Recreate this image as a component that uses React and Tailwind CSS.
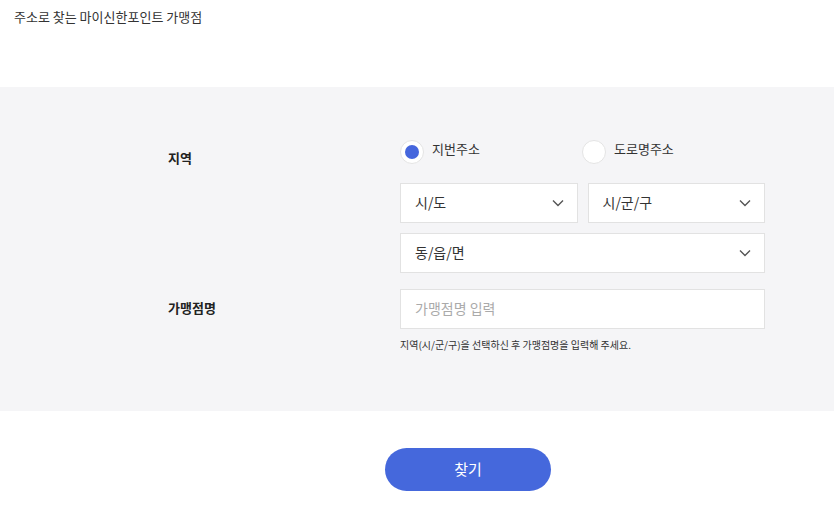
import React from "react";

const Chevron = () => (
  <svg width="14" height="14" viewBox="0 0 14 14" fill="none" className="text-[#555]">
    <path d="M2 4.5l5 5 5-5" stroke="currentColor" strokeWidth="1.4" />
  </svg>
);

const Select = ({ label, className = "" }) => (
  <div className={`h-10 bg-white border border-[#e2e2e2] flex items-center justify-between pl-[14px] pr-[12px] ${className}`}>
    <span className="text-[14px] text-[#333]">{label}</span>
    <Chevron />
  </div>
);

const Radio = ({ checked, label }) => (
  <label className="flex items-center gap-2 w-[182px]">
    <span className="w-6 h-6 rounded-full bg-white border border-[#e4e4e4] flex items-center justify-center">
      {checked && <span className="w-[14px] h-[14px] rounded-full bg-[#4566dd]" />}
    </span>
    <span className="text-[13px] text-[#333] -mt-[6px]">{label}</span>
  </label>
);

export default function App() {
  return (
    <div className="w-[834px] h-[518px] bg-white font-['Noto_Sans_CJK_KR','Noto_Sans',sans-serif] text-[#222]">
      <div className="pt-[7px] pl-[14px] text-[13px] text-[#333]">주소로 찾는 마이신한포인트 가맹점</div>

      <div className="mt-[60px] h-[324px] bg-[#f5f5f7] pt-[53px] pl-[168px]">
        {/* 지역 */}
        <div className="flex">
          <div className="w-[232px] pt-[8px] text-[13px] font-bold text-[#222]">지역</div>
          <div className="w-[365px]">
            <div className="flex">
              <Radio checked label="지번주소" />
              <Radio label="도로명주소" />
            </div>
            <div className="mt-[19px] flex gap-[10px]">
              <Select label="시/도" className="flex-1" />
              <Select label="시/군/구" className="flex-1" />
            </div>
            <Select label="동/읍/면" className="mt-[10px]" />
          </div>
        </div>

        {/* 가맹점명 */}
        <div className="flex mt-[16px]">
          <div className="w-[232px] pt-[9px] text-[13px] font-bold text-[#222]">가맹점명</div>
          <div className="w-[365px]">
            <div className="h-10 bg-white border border-[#e2e2e2] flex items-center pl-[14px] text-[14px] text-[#aaa]">
              가맹점명 입력
            </div>
            <p className="mt-[8px] text-[10px] text-[#333]">지역(시/군/구)을 선택하신 후 가맹점명을 입력해 주세요.</p>
          </div>
        </div>
      </div>

      <div className="flex pl-[385px] pt-[37px]">
        <button className="w-[166px] h-[43px] rounded-full bg-[#4568dc] text-white text-[15px]">찾기</button>
      </div>
    </div>
  );
}
